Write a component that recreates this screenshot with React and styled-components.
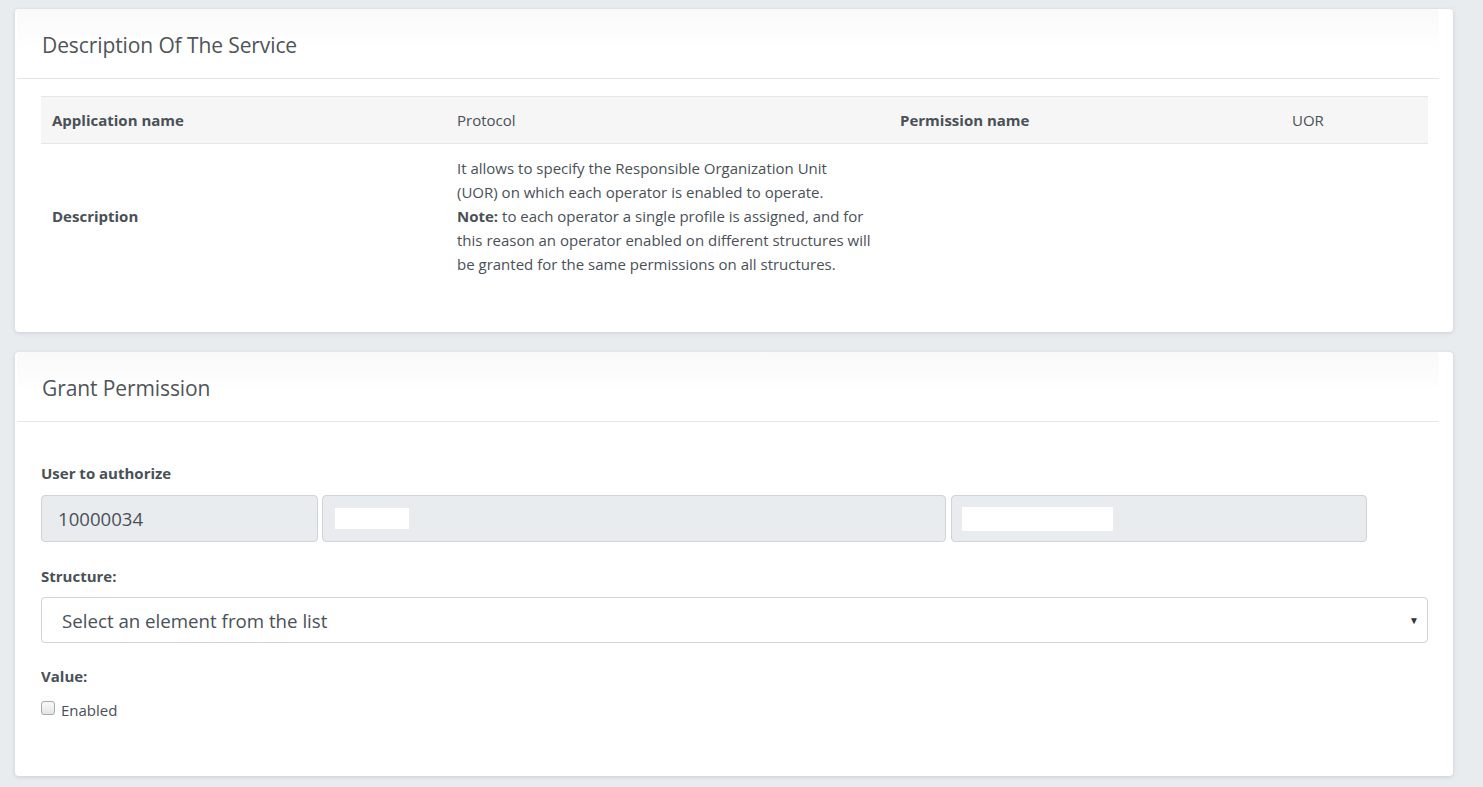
import React from 'react';
import styled, { createGlobalStyle } from 'styled-components';

const GlobalStyle = createGlobalStyle`
  html, body {
    margin: 0;
    padding: 0;
    background: #e9ecef;
    font-family: "Open Sans", "Noto Sans", sans-serif;
    color: #495057;
  }
  * { box-sizing: border-box; }
`;

const Page = styled.div`
  display: flex;
  flex-direction: column;
  gap: 20px;
  padding: 9px 30px 10px 15px;
  min-height: 787px;
`;

const Card = styled.section`
  background: #fff;
  border-radius: 4px;
  box-shadow: 0 1px 4px rgba(60, 70, 90, 0.18);
  padding-bottom: ${p => p.bottom || 40}px;
`;

const CardHeader = styled.div`
  margin: 0 14px 0 2px;
  padding: 22px 25px 0;
  height: 70px;
  border-bottom: 1px solid #e4e4f2;
  background: linear-gradient(#f9f9f9, #fff 60%);
  border-radius: 4px 4px 0 0;
`;

const Title = styled.h3`
  margin: 0;
  font-size: 21px;
  font-weight: 400;
  color: #4f5458;
  letter-spacing: -0.1px;
`;

const CardBody = styled.div`
  padding: ${p => p.pad || '17px 25px 0 26px'};
`;

const Table = styled.table`
  width: 100%;
  border-collapse: collapse;
  font-size: 15px;
  color: #495057;
`;

const Th = styled.td`
  padding: 0 11px;
  height: 47px;
  background: #f6f6f6;
  border-top: 1px solid #e6e6e6;
  border-bottom: 1px solid #e6e6e6;
  font-weight: ${p => (p.bold ? 700 : 400)};
  width: ${p => p.w}px;
  vertical-align: middle;
`;

const Td = styled.td`
  padding: 12px 11px 19px;
  vertical-align: middle;
  line-height: 24px;
  font-weight: ${p => (p.bold ? 700 : 400)};
`;

const Label = styled.div`
  font-size: 15px;
  font-weight: 700;
  color: #495057;
  margin: ${p => p.m || '0 0 10px'};
`;

const InputRow = styled.div`
  display: flex;
  gap: 4px;
  margin-bottom: 24px;
`;

const ReadOnly = styled.div`
  width: ${p => p.w}px;
  height: 47px;
  background: #e9ecef;
  border: 1px solid #ced4da;
  border-radius: 4px;
  display: flex;
  align-items: center;
  padding: 0 16px;
  font-size: 18.6px;
  color: #495057;
  ${p => p.gap ? `margin-left: ${p.gap}px;` : ''}
`;

const Redacted = styled.span`
  display: block;
  width: ${p => p.w}px;
  height: ${p => p.h}px;
  background: #fff;
  margin-left: ${p => p.ml || -4}px;
`;

const Select = styled.div`
  height: 46px;
  border: 1px solid #ced4da;
  border-radius: 4px;
  display: flex;
  align-items: center;
  justify-content: space-between;
  padding: 0 8px 0 20px;
  font-size: 18.7px;
  color: #495057;
  margin-bottom: 23px;
`;

const Caret = styled.span`
  font-size: 10px;
  color: #333;
`;

const CheckRow = styled.label`
  display: flex;
  align-items: center;
  gap: 6px;
  font-size: 15px;
  color: #495057;
`;

const Box = styled.span`
  width: 14px;
  height: 14px;
  border: 1px solid #a8a8a8;
  border-radius: 3px;
  background: linear-gradient(#fafafa, #e4e4e4);
  margin-top: -4px;
`;

export default function App() {
  return (
    <>
      <GlobalStyle />
      <Page>
        <Card bottom={37}>
          <CardHeader>
            <Title>Description Of The Service</Title>
          </CardHeader>
          <CardBody>
            <Table>
              <tbody>
                <tr>
                  <Th bold w={405}>Application name</Th>
                  <Th w={443}>Protocol</Th>
                  <Th bold w={392}>Permission name</Th>
                  <Th>UOR</Th>
                </tr>
                <tr>
                  <Td bold>Description</Td>
                  <Td>
                    It allows to specify the Responsible Organization Unit
                    <br />
                    (UOR) on which each operator is enabled to operate.
                    <br />
                    <b>Note:</b> to each operator a single profile is assigned, and for this reason an operator enabled on different structures will be granted for the same permissions on all structures.
                  </Td>
                  <Td />
                  <Td />
                </tr>
              </tbody>
            </Table>
          </CardBody>
        </Card>

        <Card bottom={56}>
          <CardHeader>
            <Title>Grant Permission</Title>
          </CardHeader>
          <CardBody pad="41px 25px 0 26px">
            <Label m="0 0 12px">User to authorize</Label>
            <InputRow>
              <ReadOnly w={277}>10000034</ReadOnly>
              <ReadOnly w={624}><Redacted w={74} h={21} ml={-4} /></ReadOnly>
              <ReadOnly w={416} gap={1}><Redacted w={151} h={24} ml={-6} /></ReadOnly>
            </InputRow>
            <Label m="0 0 11px">Structure:</Label>
            <Select>
              <span>Select an element from the list</span>
              <Caret>▼</Caret>
            </Select>
            <Label m="0 0 14px">Value:</Label>
            <CheckRow>
              <Box />
              Enabled
            </CheckRow>
          </CardBody>
        </Card>
      </Page>
    </>
  );
}
